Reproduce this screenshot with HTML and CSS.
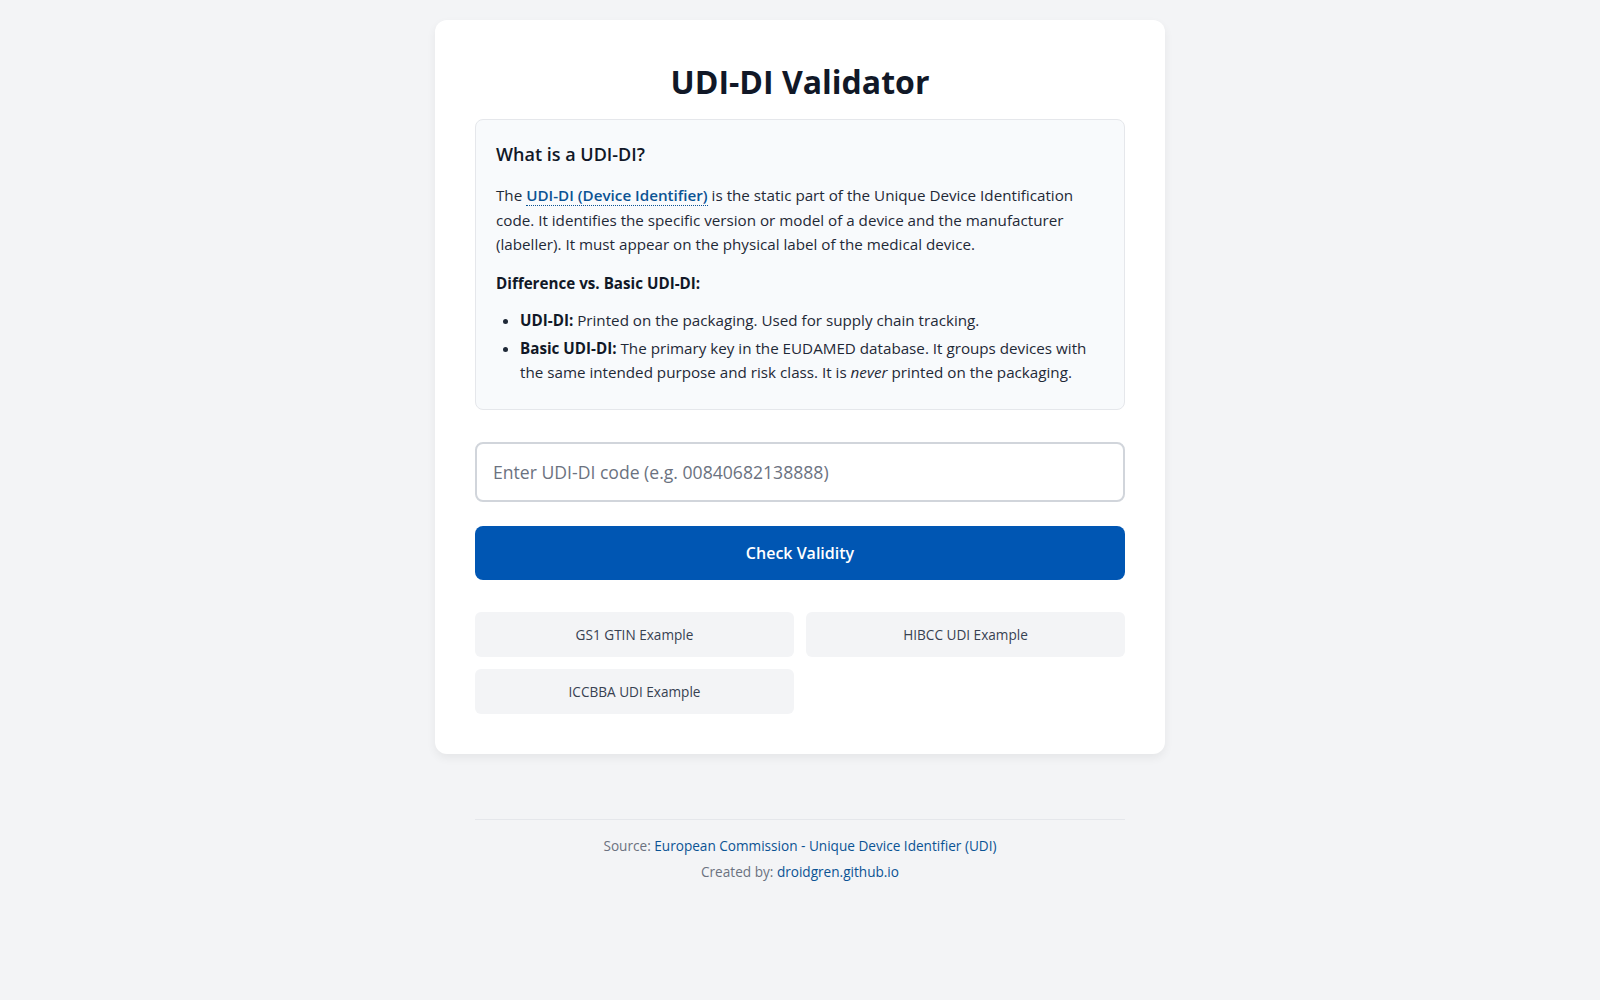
FILE: index.html
```html
<!DOCTYPE html>
<html lang="en">
<head>
<meta charset="utf-8">
<title>UDI-DI Validator</title>
<link rel="stylesheet" href="styles.css">
</head>
<body>
<main class="card">
  <h1 class="title">UDI-DI Validator</h1>
  <section class="info">
    <h3 class="info-title">What is a UDI-DI?</h3>
    <p class="info-text">The <a class="term" href="#">UDI-DI (Device Identifier)</a> is the static part of the Unique Device Identification code. It identifies the specific version or model of a device and the manufacturer (labeller). It must appear on the physical label of the medical device.</p>
    <p class="info-sub">Difference vs. Basic UDI-DI:</p>
    <ul class="info-list">
      <li><strong>UDI-DI:</strong> Printed on the packaging. Used for supply chain tracking.</li>
      <li><strong>Basic UDI-DI:</strong> The primary key in the EUDAMED database. It groups devices with the same intended purpose and risk class. It is <em>never</em> printed on the packaging.</li>
    </ul>
  </section>
  <input class="code-input" type="text" placeholder="Enter UDI-DI code (e.g. 00840682138888)">
  <button class="check-btn" type="button">Check Validity</button>
  <div class="examples">
    <button class="example-btn" type="button">GS1 GTIN Example</button>
    <button class="example-btn" type="button">HIBCC UDI Example</button>
    <button class="example-btn" type="button">ICCBBA UDI Example</button>
  </div>
</main>
<footer class="footer">
  <p class="footer-line">Source: <a href="#">European Commission - Unique Device Identifier (UDI)</a></p>
  <p class="footer-line">Created by: <a href="#">droidgren.github.io</a></p>
</footer>
</body>
</html>
```

FILE: styles.css
```css
* { box-sizing: border-box; }

html, body {
  margin: 0;
  padding: 0;
}

body {
  background: #f3f4f6;
  font-family: "Open Sans", "Noto Sans", sans-serif;
  color: #1f2937;
  padding: 20px 0;
}

.card {
  width: 730px;
  margin: 0 auto;
  background: #ffffff;
  border-radius: 12px;
  padding: 40px;
  box-shadow: 0 4px 10px rgba(0, 0, 0, 0.06);
  display: flex;
  flex-direction: column;
}

.title {
  margin: 0 0 16px;
  font-size: 32px;
  line-height: 43px;
  font-weight: 700;
  color: #111827;
  text-align: center;
}

.info {
  background: #f8fafc;
  border: 1px solid #e5e7eb;
  border-radius: 8px;
  padding: 21px 20px 20px;
  margin-bottom: 32px;
}

.info-title {
  margin: 0 0 15px;
  font-size: 18px;
  line-height: 27px;
  font-weight: 600;
  color: #111827;
}

.info-text {
  margin: 0 0 14px;
  font-size: 15.2px;
  line-height: 24.5px;
  color: #1f2937;
}

.term {
  color: #0b5394;
  font-weight: 600;
  text-decoration: none;
  border-bottom: 1px dotted #0b5394;
}

.info-sub {
  margin: 0;
  font-size: 15.2px;
  line-height: 24px;
  font-weight: 700;
  color: #111827;
}

.info-list {
  margin: 13px 0 0;
  padding-left: 24px;
  font-size: 15.2px;
  line-height: 24px;
}

.info-list li {
  margin-bottom: 4.5px;
}

.info-list strong {
  color: #111827;
}

.code-input {
  width: 100%;
  font-family: inherit;
  font-size: 17.6px;
  line-height: 26px;
  padding: 15px 16px;
  border: 2px solid #d1d5db;
  border-radius: 8px;
  color: #111827;
  background: #ffffff;
  outline: none;
}

.code-input::placeholder {
  color: #6b7280;
}

.check-btn {
  margin-top: 24px;
  width: 100%;
  font-family: inherit;
  font-size: 16px;
  line-height: 22px;
  font-weight: 600;
  padding: 16px;
  border: none;
  border-radius: 8px;
  background: #0056b3;
  color: #ffffff;
  cursor: pointer;
}

.examples {
  margin-top: 32px;
  display: grid;
  grid-template-columns: 1fr 1fr;
  gap: 12px;
}

.example-btn {
  font-family: inherit;
  font-size: 13.6px;
  line-height: 21px;
  padding: 12px;
  border: none;
  border-radius: 6px;
  background: #f3f4f6;
  color: #374151;
  cursor: pointer;
}

.footer {
  width: 650px;
  margin: 65px auto 0;
  border-top: 1px solid #e5e7eb;
  padding-top: 15px;
  text-align: center;
  font-size: 13.6px;
  color: #6b7280;
}

.footer-line {
  margin: 0 0 5px;
  line-height: 21px;
}

.footer a {
  color: #0b5394;
  text-decoration: none;
}
```
